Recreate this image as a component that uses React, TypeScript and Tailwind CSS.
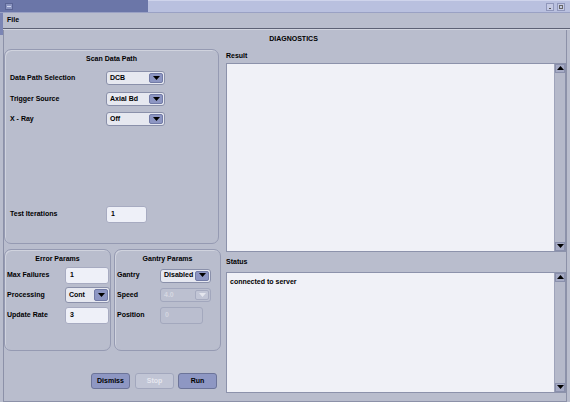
import React from "react";

const Arrow = ({ up = false, color = "#000" }: { up?: boolean; color?: string }) => (
  <svg width="7" height="5" viewBox="0 0 7 5">
    {up ? <path d="M3.5 0 L7 4 L0 4 Z" fill={color} /> : <path d="M0 0 L7 0 L3.5 4 Z" fill={color} />}
  </svg>
);

const Combo = ({
  value,
  w,
  h = 14,
  disabled = false,
}: {
  value: string;
  w: string;
  h?: number;
  disabled?: boolean;
}) => (
  <div
    className={`${w} ${
      h === 16 ? "h-[16px]" : "h-[14px]"
    } flex items-stretch rounded-[3px] border overflow-hidden ${
      disabled ? "border-[#a2a7bd] bg-[#bcc0d0]" : "border-[#8a90aa] bg-[#e6e8f0]"
    }`}
  >
    <div
      className={`flex-1 pl-[3px] flex items-center whitespace-nowrap overflow-hidden ${
        disabled ? "text-[#d6d8e2]" : "text-black"
      }`}
    >
      {value}
    </div>
    <div
      className={`w-[14px] shrink-0 my-[1px] mr-[1px] rounded-[2px] flex items-center justify-center border ${
        disabled ? "bg-[#c2c6d6] border-[#a6abc0]" : "bg-[#8d96c3] border-[#727ba6]"
      }`}
    >
      <Arrow color={disabled ? "#e4e6ee" : "#000"} />
    </div>
  </div>
);

const Field = ({
  value,
  w,
  disabled = false,
}: {
  value: string;
  w: string;
  disabled?: boolean;
}) => (
  <div
    className={`${w} h-[17px] rounded-[3px] border flex items-center pl-[4px] ${
      disabled
        ? "border-[#a3a8bd] bg-[#babecf] text-[#d4d6e0]"
        : "border-[#a7abc1] bg-[#eef0f8] text-black"
    }`}
  >
    {value}
  </div>
);

const Button = ({ label, disabled = false }: { label: string; disabled?: boolean }) => (
  <div
    className={`w-[39px] h-[16px] rounded-[3px] border flex items-center justify-center ${
      disabled
        ? "bg-[#c1c5d5] border-[#a2a7bd] text-[#e6e7ef]"
        : "bg-[#8e97c3] border-[#6c7499] text-black"
    }`}
  >
    {label}
  </div>
);

const ScrollArea = ({ h, children }: { h: string; children?: React.ReactNode }) => (
  <div className={`${h} flex border border-[#8c92ab]`}>
    <div className="flex-1 bg-[#f0f1f7] pl-[3px] pt-[4px] leading-[10px]">{children}</div>
    <div className="w-[11px] bg-[#b5b9ca] border-l border-[#9ea3ba] flex flex-col justify-between">
      <div className="h-[9px] bg-[#a6abc5] border border-[#8a90ac] flex items-center justify-center">
        <Arrow up />
      </div>
      <div className="h-[9px] bg-[#a6abc5] border border-[#8a90ac] flex items-center justify-center">
        <Arrow />
      </div>
    </div>
  </div>
);

export default function App() {
  return (
    <div className="w-[570px] h-[402px] overflow-hidden bg-[#b9bdcd] flex flex-col font-['Liberation_Sans',Arial,sans-serif] font-bold text-[7px] text-black">
      {/* title bar */}
      <div className="h-[13px] flex border-b border-[#9aa1c4]">
        <div className="w-[148px] bg-[#6b76a8] flex items-center pl-[5px]">
          <div className="w-[8px] h-[7px] bg-[#8a94c0] border border-[#5a6494] flex items-center justify-center">
            <div className="w-[4px] h-[1px] bg-[#d0d6ee]" />
          </div>
        </div>
        <div className="flex-1 bg-[#b9c0df] flex items-center justify-end gap-[3px] pr-[5px] border-t border-[#cfd4ec]">
          <div className="w-[8px] h-[8px] bg-[#c5cae4] border border-[#9097bb] flex items-end justify-center">
            <div className="w-[2px] h-[1px] mb-[1px] bg-[#555]" />
          </div>
          <div className="w-[8px] h-[8px] bg-[#c5cae4] border border-[#9097bb] flex items-center justify-center">
            <div className="w-[4px] h-[4px] border border-[#666]" />
          </div>
        </div>
      </div>
      {/* menu bar */}
      <div className="h-[15px] flex items-center pl-[7px] relative">
        <div className="absolute left-0 top-0 w-[3px] h-[22px] bg-[#7b85b4]" />
        File
      </div>
      <div className="h-[1px] bg-[#5d6175]" />
      <div className="h-[1px] bg-[#d2d5e0]" />

      {/* body */}
      <div className="flex-1 flex flex-col border-l border-[#8c91a8] ml-[3px] mr-[3px] border-r border-b">
        <div className="h-[19px] flex items-center justify-center pl-[17px]">DIAGNOSTICS</div>
        <div className="flex">
          {/* left column */}
          <div className="w-[217px] flex flex-col">
            <div className="w-[215px] h-[195px] rounded-[7px] border border-[#959ab2] flex flex-col pt-[4px] pl-[5px] pb-[20px] shadow-[inset_1px_1px_0_#d0d3de]">
              <div className="h-[10px] leading-[10px] text-center pr-[5px]">Scan Data Path</div>
              <div className="flex items-center h-[14px] mt-[7px]">
                <div className="w-[96px]">Data Path Selection</div>
                <Combo value="DCB" w="w-[59px]" />
              </div>
              <div className="flex items-center h-[14px] mt-[7px]">
                <div className="w-[96px]">Trigger Source</div>
                <Combo value="Axial Bd" w="w-[59px]" />
              </div>
              <div className="flex items-center h-[14px] mt-[6px]">
                <div className="w-[96px]">X - Ray</div>
                <Combo value="Off" w="w-[59px]" />
              </div>
              <div className="flex items-center mt-auto">
                <div className="w-[96px]">Test Iterations</div>
                <Field value="1" w="w-[41px]" />
              </div>
            </div>
            <div className="flex mt-[5px] gap-[3px]">
              <div className="w-[107px] h-[102px] rounded-[7px] border border-[#959ab2] flex flex-col pt-[4px] pl-[2px] shadow-[inset_1px_1px_0_#d0d3de]">
                <div className="h-[10px] leading-[10px] text-center pr-[2px]">Error Params</div>
                <div className="flex items-center h-[17px] mt-[3px]">
                  <div className="w-[58px]">Max Failures</div>
                  <Field value="1" w="w-[44px]" />
                </div>
                <div className="flex items-center h-[16px] mt-[3px]">
                  <div className="w-[58px]">Processing</div>
                  <Combo value="Cont" w="w-[45px]" h={16} />
                </div>
                <div className="flex items-center h-[17px] mt-[4px]">
                  <div className="w-[58px]">Update Rate</div>
                  <Field value="3" w="w-[44px]" />
                </div>
              </div>
              <div className="w-[107px] h-[102px] rounded-[7px] border border-[#959ab2] flex flex-col pt-[4px] pl-[2px] shadow-[inset_1px_1px_0_#d0d3de]">
                <div className="h-[10px] leading-[10px] text-center pr-[2px]">Gantry Params</div>
                <div className="flex items-center h-[17px] mt-[3px]">
                  <div className="w-[43px]">Gantry</div>
                  <Combo value="Disabled" w="w-[51px]" />
                </div>
                <div className="flex items-center h-[16px] mt-[3px]">
                  <div className="w-[43px]">Speed</div>
                  <Combo value="4.0" w="w-[51px]" disabled />
                </div>
                <div className="flex items-center h-[17px] mt-[4px]">
                  <div className="w-[43px]">Position</div>
                  <Field value="0" w="w-[43px]" disabled />
                </div>
              </div>
            </div>
            <div className="flex justify-end mt-[22px] pr-[4px]">
              <Button label="Dismiss" />
              <div className="w-[5px]" />
              <Button label="Stop" disabled />
              <div className="w-[4px]" />
              <Button label="Run" />
            </div>
          </div>
          {/* right column */}
          <div className="flex-1 ml-[5px] flex flex-col">
            <div className="h-[14px] leading-[14px]">Result</div>
            <ScrollArea h="h-[189px]" />
            <div className="h-[20px] leading-[20px]">Status</div>
            <ScrollArea h="h-[121px]">connected to server</ScrollArea>
          </div>
        </div>
      </div>
    </div>
  );
}
